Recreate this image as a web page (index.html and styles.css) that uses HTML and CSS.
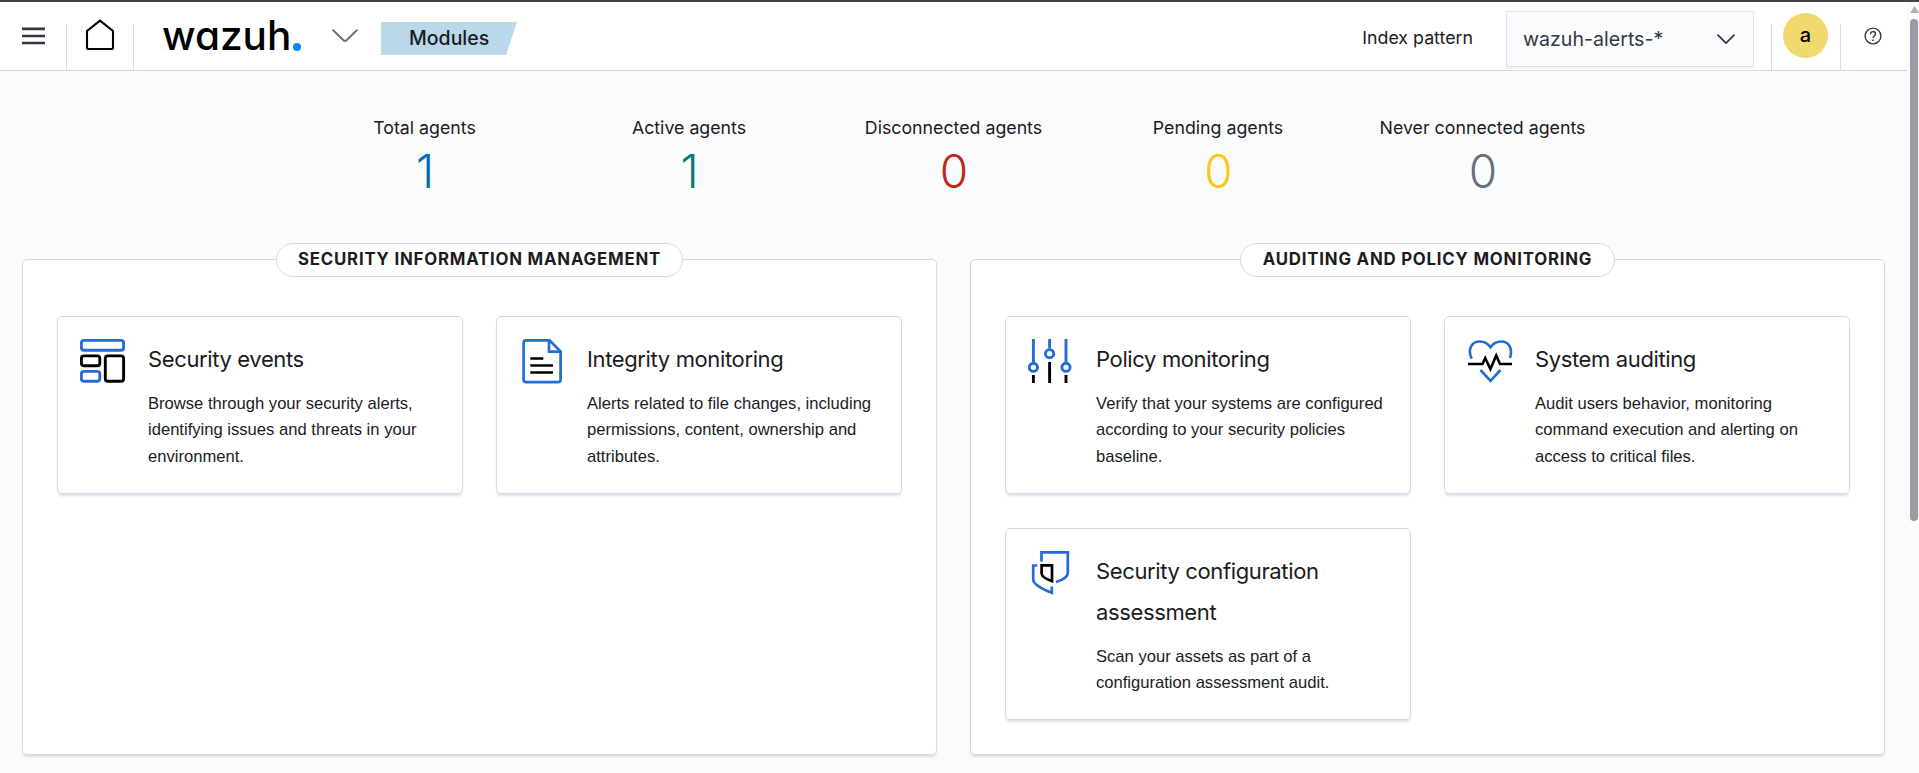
FILE: index.html
```html
<!DOCTYPE html>
<html lang="en">
<head>
<meta charset="utf-8">
<title>Wazuh</title>
<link rel="stylesheet" href="styles.css">
</head>
<body>
<div class="app">
  <div class="page">
    <header class="header">
      <button class="menu-btn" aria-label="Menu">
        <svg width="24" height="18" viewBox="0 0 24 18"><path d="M0 1.9h23M0 9h23M0 16h23" stroke="#343741" stroke-width="2.6"/></svg>
      </button>
      <button class="home-btn" aria-label="Home">
        <svg width="30" height="32" viewBox="0 0 30 32" fill="none" stroke="#000" stroke-width="2.1" stroke-linejoin="round"><path d="M2 12 15 1.6 28 12V28.5Q28 30 26.5 30H3.500Q2 30 2 28.500Z"/></svg>
      </button>
      <div class="logo"><span class="logo-text">wazuh</span><span class="logo-dot"></span></div>
      <svg class="logo-chevron" width="26" height="14" viewBox="0 0 26 14" fill="none" stroke="#69707d" stroke-width="2" stroke-linecap="round"><path d="M1.200 1.300 11.500 11.300Q13 12.700 14.500 11.300L24.800 1.300"/></svg>
      <div class="crumb">Modules</div>
      <div class="index-label">Index pattern</div>
      <div class="select"><span class="select-text">wazuh-alerts-*</span>
        <svg width="18" height="11" viewBox="0 0 18 11" fill="none" stroke="#343741" stroke-width="1.700" stroke-linecap="round" stroke-linejoin="round"><path d="M1 1.200 9 9.200 17 1.200"/></svg>
      </div>
      <div class="user"><span class="avatar">a</span></div>
      <div class="help">
        <svg width="18" height="18" viewBox="0 0 18 18" fill="none" stroke="#343741" stroke-width="1.400"><circle cx="9" cy="9" r="7.900"/><path d="M6.500 7.200C6.500 3.700 11.500 3.800 11.500 6.900 11.500 8.800 9 8.700 9 11.100"/><path d="M9 12.400v1.500" stroke-width="1.600"/></svg>
      </div>
    </header>

    <section class="stats">
      <div class="stat"><div class="stat-label">Total agents</div><div class="stat-num blue">1</div></div>
      <div class="stat"><div class="stat-label">Active agents</div><div class="stat-num green">1</div></div>
      <div class="stat"><div class="stat-label">Disconnected agents</div><div class="stat-num red">0</div></div>
      <div class="stat"><div class="stat-label">Pending agents</div><div class="stat-num yellow">0</div></div>
      <div class="stat"><div class="stat-label">Never connected agents</div><div class="stat-num gray">0</div></div>
    </section>

    <main class="panels">
      <section class="panel">
        <h2 class="pill pill-sim">SECURITY INFORMATION MANAGEMENT</h2>
        <div class="cards">
          <article class="card">
            <svg class="icon" viewBox="0 0 46 46" fill="none" stroke-width="2.900"><rect x="1.400" y="1.400" width="42.200" height="9.800" rx="2.500" stroke="#246bd6"/><rect x="1.400" y="16.900" width="18.400" height="9.800" rx="2.500" stroke="#000"/><rect x="1.400" y="32.400" width="18.400" height="9.800" rx="2.500" stroke="#246bd6"/><rect x="25.300" y="16.900" width="18.300" height="25.300" rx="2.500" stroke="#000"/></svg>
            <div class="card-body"><h3>Security events</h3><p>Browse through your security alerts,<br>identifying issues and threats in your<br>environment.</p></div>
          </article>
          <article class="card">
            <svg class="icon" viewBox="0 0 46 46" fill="none" stroke="#246bd6" stroke-width="2.700"><path d="M7.500 1.400H30.500L41.600 12.500V40.500Q41.600 43.200 38.900 43.200H7.300Q4.600 43.200 4.600 40.500V4.100Q4.600 1.400 7.300 1.400Z"/><path d="M30 1.400V12.600H41.600"/><path d="M11.300 19.500h13M11.300 26.500h22.700M11.300 33.500h22.700" stroke="#000"/></svg>
            <div class="card-body"><h3>Integrity monitoring</h3><p>Alerts related to file changes, including<br>permissions, content, ownership and<br>attributes.</p></div>
          </article>
        </div>
      </section>

      <section class="panel">
        <h2 class="pill pill-audit">AUDITING AND POLICY MONITORING</h2>
        <div class="cards">
          <article class="card">
            <svg class="icon" viewBox="0 0 46 46" fill="none" stroke="#246bd6" stroke-width="2.900"><path d="M5.400 0V23.500M21.600 0V9.500M38 0V23.500"/><circle cx="5.400" cy="28.300" r="4.100"/><circle cx="21.600" cy="14.700" r="4.100"/><circle cx="38" cy="28.300" r="4.100"/><path d="M5.400 36v8M21.600 23v21M38 36v8" stroke="#000"/></svg>
            <div class="card-body"><h3>Policy monitoring</h3><p>Verify that your systems are configured<br>according to your security policies<br>baseline.</p></div>
          </article>
          <article class="card">
            <svg class="icon" viewBox="-1 0 46 46" fill="none" stroke="#246bd6" stroke-width="2.600"><path d="M3.700 19.600C-.8 10.500 3.600 2.500 11.800 2.500 16.500 2.500 20 4.800 22.500 8.300 25 4.800 28.500 2.500 33.200 2.500 41.400 2.500 44.800 10 42 18.800"/><path d="M12.500 31 22.500 41.800 32.500 31"/><path d="M0 25H14.500L17.200 19 22.400 30 28.200 16.500 32 25H44" stroke="#000"/></svg>
            <div class="card-body"><h3>System auditing</h3><p>Audit users behavior, monitoring<br>command execution and alerting on<br>access to critical files.</p></div>
          </article>
          <article class="card card-tall">
            <svg class="icon" viewBox="0 0 46 46" fill="none" stroke="#246bd6" stroke-width="2.700"><path d="M13.500 10.500V1.400H39.800V22Q39.800 27.200 28 31"/><path d="M9.300 14.500H5.200V28.500Q5.200 34.500 23.800 41.800V35.500"/><path d="M13.600 14.400H24V30.200Q13.600 26.500 13.600 22.500Z" stroke="#000"/></svg>
            <div class="card-body"><h3>Security configuration<br>assessment</h3><p>Scan your assets as part of a<br>configuration assessment audit.</p></div>
          </article>
        </div>
      </section>
    </main>
  </div>
  <div class="scrollbar"><div class="scroll-arrow"></div><div class="scroll-thumb"></div></div>
</div>
</body>
</html>
```
FILE: styles.css
```css
* { box-sizing: border-box; }
body {
  margin: 0;
  font-family: Inter, "Liberation Sans", sans-serif;
  color: #1a1c21;
  background: #fafbfd;
}
.app {
  display: flex;
  height: 773px;
  border-top: 2px solid #444;
  overflow: hidden;
}
.page { width: 1907px; }
button { border: 0; background: none; padding: 0; }

.header {
  display: flex;
  align-items: flex-start;
  height: 69px;
  background: #fff;
  border-bottom: 1px solid #d3dae6;
}
.menu-btn { width: 66px; height: 68px; padding: 0 0 0 22px; text-align: left; }
.menu-btn svg, .home-btn svg { display: block; }
.home-btn {
  width: 68px;
  height: 46px;
  margin-top: 22px;
  border: solid #d3dae6;
  border-width: 0 1px;
}
.home-btn svg { margin: -25px 0 0 18px; }
.logo { display: flex; width: 140px; height: 60px; margin-left: 28px; }
.logo-text {
  width: 131px;
  padding-top: 10px;
  font-size: 40.5px;
  font-weight: 550;
  line-height: 48px;
  color: #000;
  font-feature-settings: "cv11";
}
.logo-dot { width: 8px; height: 8px; margin-top: 41px; border-radius: 50%; background: #0a84ff; }
.logo-chevron { margin: 27px 0 0 30px; }
.crumb {
  width: 136px;
  height: 33px;
  margin: 20px 0 0 23px;
  padding-left: 28px;
  font-size: 19.5px;
  font-weight: 500;
  line-height: 33px;
  background: #b9d9eb;
  clip-path: polygon(0 0, 100% 0, 92% 100%, 0 100%);
}
.index-label { margin-left: auto; margin-right: 33px; font-size: 17.8px; line-height: 72px; }
.select {
  display: flex;
  align-items: center;
  justify-content: space-between;
  width: 248px;
  height: 56px;
  margin-top: 9px;
  padding: 0 18px 0 16px;
  font-size: 19.6px;
  color: #343741;
  background: #fbfcfd;
  border: 1px solid #e0e4ef;
  box-shadow: 0 2px 2px -1px rgba(152, 162, 179, .3);
}
.user {
  width: 70px;
  height: 46px;
  margin: 22px 0 0 17px;
  border: solid #d3dae6;
  border-width: 0 1px;
}
.avatar {
  display: block;
  width: 45px;
  height: 45px;
  margin: -11px 0 0 11px;
  border-radius: 50%;
  background: #f1d86f;
  color: #000;
  font-size: 20px;
  font-weight: 500;
  line-height: 44px;
  text-align: center;
}
.help { width: 66px; padding: 25px 0 0 23px; }
.help svg { display: block; }

.stats {
  display: grid;
  grid-template-columns: repeat(5, 264.500px);
  justify-content: center;
  height: 188px;
  padding-top: 44px;
  text-align: center;
}
.stat-label { font-size: 17.75px; line-height: 26px; }
.stat-num { padding-left: 1px; font-size: 46px; font-weight: 300; line-height: 60px; }
.blue { color: #006bb4; }
.green { color: #017d73; }
.red { color: #bd271e; }
.yellow { color: #fec514; }
.gray { color: #69707d; }

.panels {
  display: grid;
  grid-template-columns: 915px 915px;
  gap: 33px;
  padding-left: 22px;
}
.panel {
  height: 496px;
  padding: 0 34px;
  background: #fff;
  border: 1px solid #d3dae6;
  border-radius: 5px;
  box-shadow: 0 3px 3px -1px rgba(152, 162, 179, .35);
}
.pill {
  height: 34px;
  margin: -17px auto 39px;
  background: #fff;
  border: 1px solid #d3dae6;
  border-radius: 17px;
  font-size: 16.8px;
  font-weight: 700;
  line-height: 31px;
  letter-spacing: .8px;
  text-align: center;
}
.pill-sim { width: 407px; }
.pill-audit { width: 375px; }
.cards { display: grid; grid-template-columns: 406px 406px; gap: 34px 33px; }
.card {
  display: flex;
  height: 178px;
  padding: 22px;
  border: 1px solid #d3dae6;
  border-radius: 5px;
  box-shadow: 0 3px 3px -1px rgba(152, 162, 179, .35);
}
.card-tall { height: 192px; }
.icon { flex: none; width: 46px; height: 46px; margin-right: 22px; }
h3 {
  margin: 0 0 11px;
  font-size: 22px;
  font-weight: 400;
  line-height: 41px;
  letter-spacing: -.37px;
}
p {
  margin: 0;
  font-family: "Liberation Sans", sans-serif;
  font-size: 16.6px;
  line-height: 26.400px;
  white-space: nowrap;
}

.scrollbar {
  width: 12px;
  padding: 4px 1px 0 3px;
  background: #fbfbfd;
}
.scroll-arrow {
  width: 9px;
  height: 7px;
  margin-bottom: 6px;
  background: #b0b3bc;
  clip-path: polygon(50% 0, 100% 100%, 0 100%);
}
.scroll-thumb { width: 8px; height: 502px; border-radius: 4px; background: #989ba5; }
```
